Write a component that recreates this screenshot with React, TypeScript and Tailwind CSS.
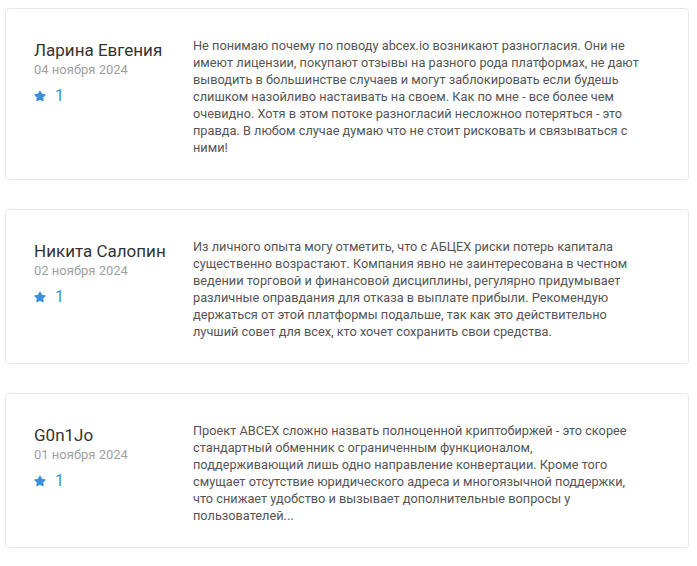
import { FaStar } from 'react-icons/fa'

interface Review {
  name: string
  date: string
  rating: number
  text: string
}

const reviews: Review[] = [
  {
    name: 'Ларина Евгения',
    date: '04 ноября 2024',
    rating: 1,
    text: 'Не понимаю почему по поводу abcex.io возникают разногласия. Они не имеют лицензии, покупают отзывы на разного рода платформах, не дают выводить в большинстве случаев и могут заблокировать если будешь слишком назойливо настаивать на своем. Как по мне - все более чем очевидно. Хотя в этом потоке разногласий несложноо потеряться - это правда. В любом случае думаю что не стоит рисковать и связываться с ними!',
  },
  {
    name: 'Никита Салопин',
    date: '02 ноября 2024',
    rating: 1,
    text: 'Из личного опыта могу отметить, что с АБЦЕХ риски потерь капитала существенно возрастают. Компания явно не заинтересована в честном ведении торговой и финансовой дисциплины, регулярно придумывает различные оправдания для отказа в выплате прибыли. Рекомендую держаться от этой платформы подальше, так как это действительно лучший совет для всех, кто хочет сохранить свои средства.',
  },
  {
    name: 'G0n1Jo',
    date: '01 ноября 2024',
    rating: 1,
    text: 'Проект ABCEX сложно назвать полноценной криптобиржей - это скорее стандартный обменник с ограниченным функционалом, поддерживающий лишь одно направление конвертации. Кроме того смущает отсутствие юридического адреса и многоязычной поддержки, что снижает удобство и вызывает дополнительные вопросы у пользователей...',
  },
]

function App() {
  return (
    <div className="min-h-screen bg-white pt-[8px] pl-[5px] font-['Roboto','Liberation_Sans',sans-serif]">
      <div className="w-[684px] flex flex-col gap-[29px]">
        {reviews.map(r => (
          <div
            key={r.name}
            className="flex border border-[#e8e8e8] rounded-[4px] bg-white pt-[28px] pb-[23px] pl-[28px]"
          >
            {/* Author */}
            <div className="w-[159px] shrink-0 pt-[3px]">
              <div className="text-[17px] leading-[20px] text-[#333]">{r.name}</div>
              <div className="text-[13px] leading-[17px] text-[#a0a0a0] mt-[1px]">{r.date}</div>
              <div className="flex items-center gap-[9px] mt-[8px] text-[#3a8fd9]">
                <FaStar className="w-[12px] h-[12px]" />
                <span className="text-[16px] leading-[20px]">{r.rating}</span>
              </div>
            </div>

            {/* Text */}
            <p className="w-[450px] text-[12.75px] leading-[17px] text-[#555]">{r.text}</p>
          </div>
        ))}
      </div>
    </div>
  )
}

export default App
